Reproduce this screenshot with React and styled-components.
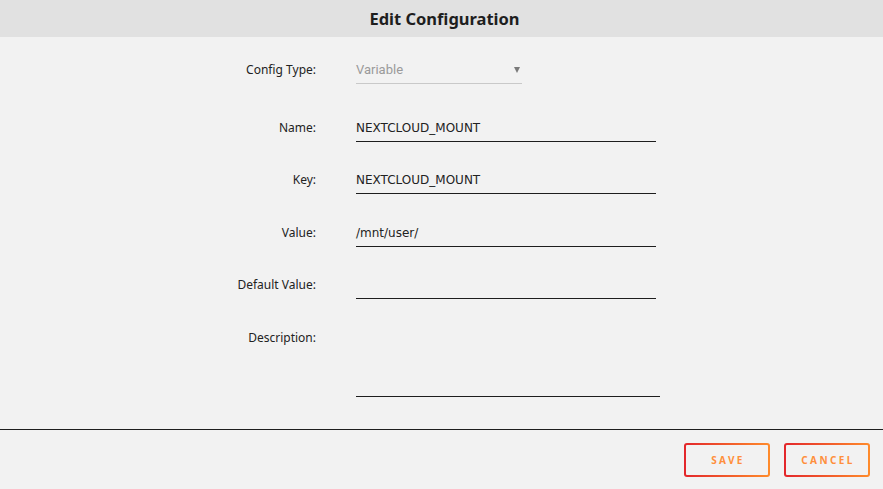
import React from 'react';
import styled, { createGlobalStyle } from 'styled-components';

const GlobalStyle = createGlobalStyle`
  body {
    margin: 0;
    background: #f2f2f2;
    font-family: 'Noto Sans', sans-serif;
  }
`

const Page = styled.div`
  width: 883px;
  height: 489px;
  display: flex;
  flex-direction: column;
  background: #f2f2f2;
`

const Header = styled.div`
  height: 37px;
  display: flex;
  align-items: center;
  justify-content: center;
  background: #e1e1e1;
`

const Title = styled.span`
  font-family: 'Noto Sans', sans-serif;
  font-size: 16.5px;
  font-weight: bold;
  color: #1e1e1e;
  margin-top: -1px;
  margin-left: 6px;
`

const Form = styled.div`
  display: flex;
  flex-direction: column;
  gap: 25.5px;
  padding-top: 20px;
  flex: 1;
`

const Row = styled.div`
  display: grid;
  grid-template-columns: 316px 1fr;
  column-gap: 40px;
  align-items: start;
  margin-bottom: ${({ extra }) => extra || 0}px;
`

const Label = styled.label`
  text-align: right;
  font-family: 'Noto Sans', sans-serif;
  font-size: 12px;
  line-height: 26px;
  color: #222;
`

const Field = styled.div`
  box-sizing: border-box;
  width: ${({ width }) => width || 300}px;
  height: ${({ height }) => height || 27}px;
  border-bottom: 1px solid ${({ light }) => (light ? '#c9c9c9' : '#1e1e1e')};
  font-family: 'DejaVu Sans', sans-serif;
  font-size: 12px;
  line-height: 26px;
  color: #222;
  display: flex;
  justify-content: space-between;
`

const Placeholder = styled.span`
  font-family: Roboto, sans-serif;
  font-size: 13px;
  color: #9a9a9a;
`

const Arrow = styled.span`
  margin-top: 10px;
  margin-right: 2px;
  width: 0;
  height: 0;
  border-left: 3.5px solid transparent;
  border-right: 3.5px solid transparent;
  border-top: 6px solid #7a7a7a;
`

const Divider = styled.div`
  height: 1px;
  background: #1e1e1e;
`

const Footer = styled.div`
  display: flex;
  justify-content: flex-end;
  gap: 14px;
  padding: 13px 13px 12px 0;
`

const Button = styled.button`
  box-sizing: border-box;
  width: 86px;
  height: 34px;
  border: 2px solid transparent;
  border-radius: 3px;
  background: linear-gradient(#f2f2f2, #f2f2f2) padding-box,
    linear-gradient(90deg, #e3262b, #ff8c2c) border-box;
  font-family: 'Noto Sans', sans-serif;
  font-size: 10px;
  font-weight: bold;
  letter-spacing: 2.4px;
  color: #ff8f3c;
  padding: 0 0 0 2px;
  cursor: pointer;
`

const fields = [
  { label: 'Name:', value: 'NEXTCLOUD_MOUNT' },
  { label: 'Key:', value: 'NEXTCLOUD_MOUNT' },
  { label: 'Value:', value: '/mnt/user/' },
  { label: 'Default Value:', value: '' },
]

export default function App() {
  return (
    <>
      <GlobalStyle />
      <Page>
        <Header>
          <Title>Edit Configuration</Title>
        </Header>
        <Form>
          <Row extra={5}>
            <Label>Config Type:</Label>
            <Field width={166} light>
              <Placeholder>Variable</Placeholder>
              <Arrow />
            </Field>
          </Row>
          {fields.map((f) => (
            <Row key={f.label}>
              <Label>{f.label}</Label>
              <Field>{f.value}</Field>
            </Row>
          ))}
          <Row>
            <Label>Description:</Label>
            <Field width={304} height={72} />
          </Row>
        </Form>
        <Divider />
        <Footer>
          <Button>SAVE</Button>
          <Button>CANCEL</Button>
        </Footer>
      </Page>
    </>
  );
}
